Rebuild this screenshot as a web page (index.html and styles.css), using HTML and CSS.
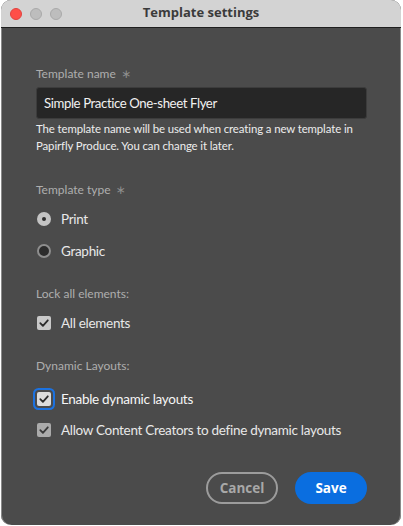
FILE: index.html
```html
<!DOCTYPE html>
<html>
<head>
<meta charset="utf-8">
<link rel="stylesheet" href="styles.css">
</head>
<body>
<div class="window">
  <div class="titlebar">
    <div class="lights">
      <span class="light red"></span>
      <span class="light gray"></span>
      <span class="light gray"></span>
    </div>
    <div class="title">Template settings</div>
  </div>
  <div class="content">
    <div class="label">Template name <span class="star">∗</span></div>
    <div class="input">Simple Practice One-sheet Flyer</div>
    <div class="help">The template name will be used when creating a new template in Papirfly Produce. You can change it later.</div>

    <div class="label sec2">Template type <span class="star">∗</span></div>
    <div class="option first">
      <span class="radio checked"></span><span class="otext">Print</span>
    </div>
    <div class="option">
      <span class="radio"></span><span class="otext">Graphic</span>
    </div>

    <div class="label sec3">Lock all elements:</div>
    <div class="option first">
      <span class="check"><svg viewBox="0 0 14 14" width="14" height="14"><path d="M3.3 7.2 L5.9 9.8 L10.8 4.3" fill="none" stroke="#2c2c2c" stroke-width="1.8" stroke-linecap="round" stroke-linejoin="round"/></svg></span><span class="otext">All elements</span>
    </div>

    <div class="label sec3">Dynamic Layouts:</div>
    <div class="option focused">
      <span class="check focus"><svg viewBox="0 0 14 14" width="14" height="14"><path d="M3.3 7.2 L5.9 9.8 L10.8 4.3" fill="none" stroke="#2c2c2c" stroke-width="1.8" stroke-linecap="round" stroke-linejoin="round"/></svg></span><span class="otext bright">Enable dynamic layouts</span>
    </div>
    <div class="option after-focus">
      <span class="check dim"><svg viewBox="0 0 14 14" width="14" height="14"><path d="M3.3 7.2 L5.9 9.8 L10.8 4.3" fill="none" stroke="#3a3a3a" stroke-width="1.8" stroke-linecap="round" stroke-linejoin="round"/></svg></span><span class="otext">Allow Content Creators to define dynamic layouts</span>
    </div>

    <div class="buttons">
      <button class="btn cancel">Cancel</button>
      <button class="btn save">Save</button>
    </div>
  </div>
</div>
</body>
</html>
```
FILE: styles.css
```css
html, body {
  margin: 0;
  padding: 0;
  background: #ffffff;
}
body {
  width: 403px;
  height: 526px;
  overflow: hidden;
  font-family: "Lato", "Open Sans", sans-serif;
}
.window {
  margin-left: 1px;
  width: 400px;
  height: 525px;
  border-radius: 10px;
  overflow: hidden;
  background: #4b4b4b;
  box-shadow: inset 1px 0 0 #8a8a8a, inset -1px 0 0 #8a8a8a;
  display: flex;
  flex-direction: column;
}
.titlebar {
  height: 27px;
  flex: none;
  background: #d3d3d3;
  border-bottom: 1px solid #1e1e1e;
  display: flex;
  align-items: center;
  position: relative;
}
.lights {
  display: flex;
  gap: 8px;
  padding-left: 9px;
}
.light {
  width: 12px;
  height: 12px;
  border-radius: 50%;
  box-sizing: border-box;
}
.light.red {
  background: #fe4f49;
  border: 0.5px solid #e0433e;
}
.light.gray {
  background: #bdbdbd;
  border: 1px solid #a9a9a9;
}
.title {
  position: absolute;
  left: 0;
  right: 0;
  top: 0;
  height: 27px;
  line-height: 25px;
  text-align: center;
  font-weight: 700;
  font-size: 13px;
  color: #3b3b3b;
  font-family: "Open Sans", sans-serif;
}
.content {
  padding: 38px 34px 0 35px;
  display: flex;
  flex-direction: column;
}
.label {
  font-size: 12px;
  color: #aeaeae;
  line-height: 16px;
  height: 16px;
}
.star {
  color: #8e8e8e;
  margin-left: 2px;
  font-size: 12px;
  font-family: "DejaVu Sans", sans-serif;
}
.input {
  margin-top: 5px;
  height: 32px;
  box-sizing: border-box;
  background: #262626;
  border: 1px solid #3c3c3c;
  border-radius: 3px;
  padding-left: 7px;
  font-size: 13.2px;
  letter-spacing: -0.4px;
  line-height: 30px;
  color: #f1f1f1;
}
.help {
  margin-top: 1px;
  font-size: 11.4px;
  letter-spacing: -0.1px;
  line-height: 17px;
  color: #ededed;
}
.sec2 {
  margin-top: 28px;
}
.sec3 {
  margin-top: 25px;
}
.option {
  display: flex;
  align-items: center;
  height: 20px;
  margin-top: 12px;
  white-space: nowrap;
}
.option.first {
  margin-top: 11px;
}
.option.focused {
  margin-top: 15px;
}
.option.after-focus {
  margin-top: 11px;
}
.otext {
  margin-left: 10px;
  font-size: 13.5px;
  letter-spacing: -0.3px;
  color: #e8e8e8;
}
.otext.bright {
  color: #f6f6f6;
}
.radio {
  width: 14px;
  height: 14px;
  border-radius: 50%;
  box-sizing: border-box;
  background: #2c2c2c;
  border: 2px solid #8e8e8e;
  flex: none;
  margin-left: 1px;
  position: relative;
}
.radio.checked {
  background: #c4c4c4;
  border: none;
}
.radio.checked::after {
  content: "";
  position: absolute;
  left: 5px;
  top: 5px;
  width: 4px;
  height: 4px;
  border-radius: 50%;
  background: #2e2e2e;
}
.check {
  width: 14px;
  height: 14px;
  border-radius: 2px;
  background: #c9c9c9;
  flex: none;
  margin-left: 1px;
  display: flex;
}
.check.focus {
  background: #dcdcdc;
  box-shadow: 0 0 0 2px #4b4b4b, 0 0 0 4px #1c72e0;
  border-radius: 2px;
}
.check.dim {
  background: #ababab;
}
.buttons {
  display: flex;
  justify-content: flex-end;
  gap: 17px;
  margin-top: 32px;
}
.btn {
  height: 32px;
  border-radius: 16px;
  font-family: "Open Sans", sans-serif;
  font-weight: 700;
  font-size: 13.5px;
  box-sizing: border-box;
  cursor: default;
}
.cancel {
  width: 72px;
  background: transparent;
  border: 2px solid #9c9c9c;
  color: #a8a8a8;
}
.save {
  width: 72px;
  background: #0a6ee0;
  border: none;
  color: #ffffff;
}
```
